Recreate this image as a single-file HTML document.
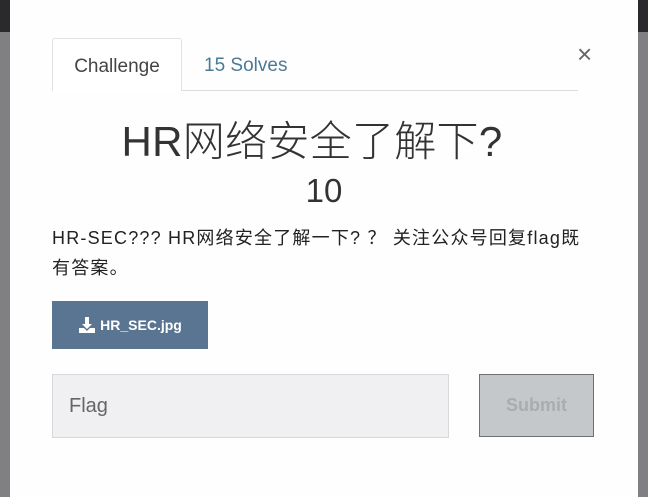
<!DOCTYPE html>
<html><head><meta charset="utf-8"><style>
*{margin:0;padding:0;box-sizing:border-box}
body{width:648px;height:497px;overflow:hidden;background:#808083;position:relative;font-family:"Liberation Sans","Noto Sans CJK SC",sans-serif}
.topbar{position:absolute;left:0;top:0;width:648px;height:32px;background:#2a2a2c}
.modal{position:absolute;left:10px;top:0;width:628px;height:497px;background:#fefefe}
.tab{position:absolute;left:52px;top:38px;width:130px;height:53px;border:1px solid #e2e2e4;border-bottom:none;background:#fff;border-radius:3px 3px 0 0;font-size:19px;color:#444;text-align:center;line-height:56px}
.tab2{position:absolute;left:204px;top:38px;font-size:19px;color:#4b7a96;line-height:56px}
.line{position:absolute;left:182px;top:90px;width:396px;height:1px;background:#dcdcde}
.x{position:absolute;left:577px;top:39px;font-size:26px;color:#666}
.title{position:absolute;left:0;width:624px;top:108px;text-align:center;font-size:42px;color:#333;font-weight:300;letter-spacing:0.3px}
.pts{position:absolute;left:0;width:648px;top:172px;text-align:center;font-size:33px;color:#333}
.desc{position:absolute;left:52px;top:223px;width:560px;font-size:18px;line-height:30px;color:#222;letter-spacing:1.2px}
.btn{position:absolute;left:52px;top:301px;width:156px;height:48px;background:#5a7592;color:#fff;font-size:14px;font-weight:bold;display:flex;align-items:center;justify-content:center}
.inp{position:absolute;left:52px;top:374px;width:397px;height:64px;background:#f0f0f2;border:1px solid #d8d8da;font-size:20px;color:#666;padding-left:16px;line-height:62px}
.sub{position:absolute;left:479px;top:374px;width:115px;height:63px;background:#c5c8ca;border:1px solid #707070;color:#a9adb0;font-size:18px;font-weight:bold;text-align:center;line-height:61px}
</style></head><body>
<div class="topbar"></div>
<div class="modal"></div>
<div class="tab">Challenge</div>
<div class="tab2">15 Solves</div>
<div class="line"></div>
<div class="x">×</div>
<div class="title">HR网络安全了解下?</div>
<div class="pts">10</div>
<div class="desc">HR-SEC??? HR网络安全了解一下? ？ 关注公众号回复flag既<br>有答案。</div>
<div class="btn"><svg width="18" height="18" viewBox="0 0 18 18" style="margin-right:4px"><path d="M7 1h4v7h3l-5 5-5-5h3z" fill="#fff"/><path d="M1 12h5l3 3 3-3h5v5H1z" fill="#fff"/></svg>HR_SEC.jpg</div>
<div class="inp">Flag</div>
<div class="sub">Submit</div>
</body></html>
